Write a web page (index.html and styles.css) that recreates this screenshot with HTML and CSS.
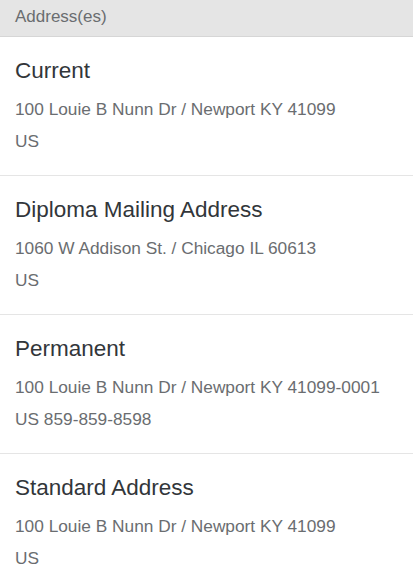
FILE: index.html
```html
<!DOCTYPE html>
<html>
<head>
<meta charset="utf-8">
<link rel="stylesheet" href="styles.css">
</head>
<body>
<div class="header">Address(es)</div>
<div class="list">
  <div class="item">
    <div class="title">Current</div>
    <div class="line">100 Louie B Nunn Dr / Newport KY 41099</div>
    <div class="line">US</div>
  </div>
  <div class="item">
    <div class="title">Diploma Mailing Address</div>
    <div class="line">1060 W Addison St. / Chicago IL 60613</div>
    <div class="line">US</div>
  </div>
  <div class="item">
    <div class="title">Permanent</div>
    <div class="line">100 Louie B Nunn Dr / Newport KY 41099-0001</div>
    <div class="line">US 859-859-8598</div>
  </div>
  <div class="item">
    <div class="title">Standard Address</div>
    <div class="line">100 Louie B Nunn Dr / Newport KY 41099</div>
    <div class="line">US</div>
  </div>
</div>
</body>
</html>
```
FILE: styles.css
```css
html, body {
  margin: 0;
  padding: 0;
  background: #ffffff;
  font-family: "Liberation Sans", Arial, sans-serif;
}
.header {
  height: 36px;
  line-height: 34px;
  padding: 0 15px;
  background: #e5e5e5;
  border-bottom: 1px solid #d6d6d6;
  color: #6a6d70;
  font-size: 17px;
}
.item {
  padding: 20px 15px 18px;
  border-bottom: 1px solid #e5e5e5;
}
.title {
  font-size: 22.5px;
  line-height: 28px;
  color: #32363a;
  margin-bottom: 8px;
}
.line {
  font-size: 17.3px;
  line-height: 32px;
  color: #6a6d70;
}
```
